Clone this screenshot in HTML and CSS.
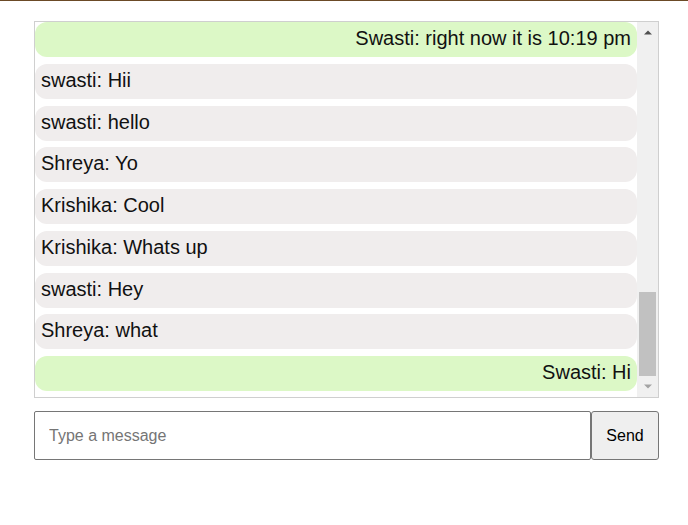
FILE: index.html
```html
<!DOCTYPE html>
<html>
<head>
<meta charset="utf-8">
<link rel="stylesheet" href="styles.css">
</head>
<body>
<div class="topline"></div>
<main class="chat">
  <div class="messages">
    <div class="list">
      <div class="msg mine">Swasti: right now it is 10:19 pm</div>
      <div class="msg other">swasti: Hii</div>
      <div class="msg other">swasti: hello</div>
      <div class="msg other">Shreya: Yo</div>
      <div class="msg other">Krishika: Cool</div>
      <div class="msg other">Krishika: Whats up</div>
      <div class="msg other">swasti: Hey</div>
      <div class="msg other">Shreya: what</div>
      <div class="msg mine">Swasti: Hi</div>
    </div>
    <div class="scrollbar" aria-hidden="true">
      <div class="sb-btn">
        <svg width="8" height="5" viewBox="0 0 8 5"><polygon points="0,4.5 4,0.5 8,4.5" fill="#505050"/></svg>
      </div>
      <div class="sb-track">
        <div class="sb-thumb"></div>
      </div>
      <div class="sb-btn">
        <svg width="8" height="5" viewBox="0 0 8 5"><polygon points="0,0.5 8,0.5 4,4.5" fill="#a3a3a3"/></svg>
      </div>
    </div>
  </div>
  <form class="composer">
    <input class="field" type="text" placeholder="Type a message">
    <button class="send" type="button">Send</button>
  </form>
</main>
</body>
</html>
```
FILE: styles.css
```css
html, body {
  margin: 0;
  padding: 0;
  background: #ffffff;
}
body {
  font-family: "Liberation Sans", Arial, sans-serif;
  color: #111;
}
.topline {
  height: 1px;
  background: #6b4a26;
}
.chat {
  width: 625px;
  margin: 20px 0 0 34px;
}
.messages {
  height: 375px;
  border: 1px solid #cfcfcf;
  overflow: hidden;
  display: flex;
}
.list {
  flex: 1;
  min-width: 0;
  display: flex;
  flex-direction: column;
  justify-content: flex-end;
  gap: 6.75px;
  padding-bottom: 6px;
}
.msg {
  font-size: 20px;
  line-height: 23px;
  padding: 5px 6px 7px 6px;
  border-radius: 12px;
  flex-shrink: 0;
}
.other {
  background: #f0eded;
  text-align: left;
}
.mine {
  background: #dcf8c6;
  text-align: right;
}
.scrollbar {
  width: 21px;
  flex-shrink: 0;
  background: #f0f0f0;
  display: flex;
  flex-direction: column;
}
.sb-btn {
  height: 21px;
  display: flex;
  align-items: center;
  justify-content: center;
}
.sb-btn svg {
  display: block;
}
.sb-track {
  flex: 1;
  display: flex;
  flex-direction: column;
  justify-content: flex-end;
  padding: 0 2px;
}
.sb-thumb {
  height: 84px;
  background: #c1c1c1;
}
.composer {
  display: flex;
  margin-top: 13px;
}
.field {
  flex: 1;
  min-width: 0;
  height: 49px;
  box-sizing: border-box;
  border: 1px solid #767676;
  border-radius: 2px;
  padding: 0 14px;
  font-family: "Liberation Sans", Arial, sans-serif;
  font-size: 16px;
  color: #111;
  margin: 0;
  outline: none;
}
.field::placeholder {
  color: #757575;
}
.send {
  width: 68px;
  height: 49px;
  box-sizing: border-box;
  border: 1px solid #767676;
  border-radius: 3px;
  background: #efefef;
  font-family: "Liberation Sans", Arial, sans-serif;
  font-size: 16px;
  color: #000;
  margin: 0;
  padding: 0;
}
```
